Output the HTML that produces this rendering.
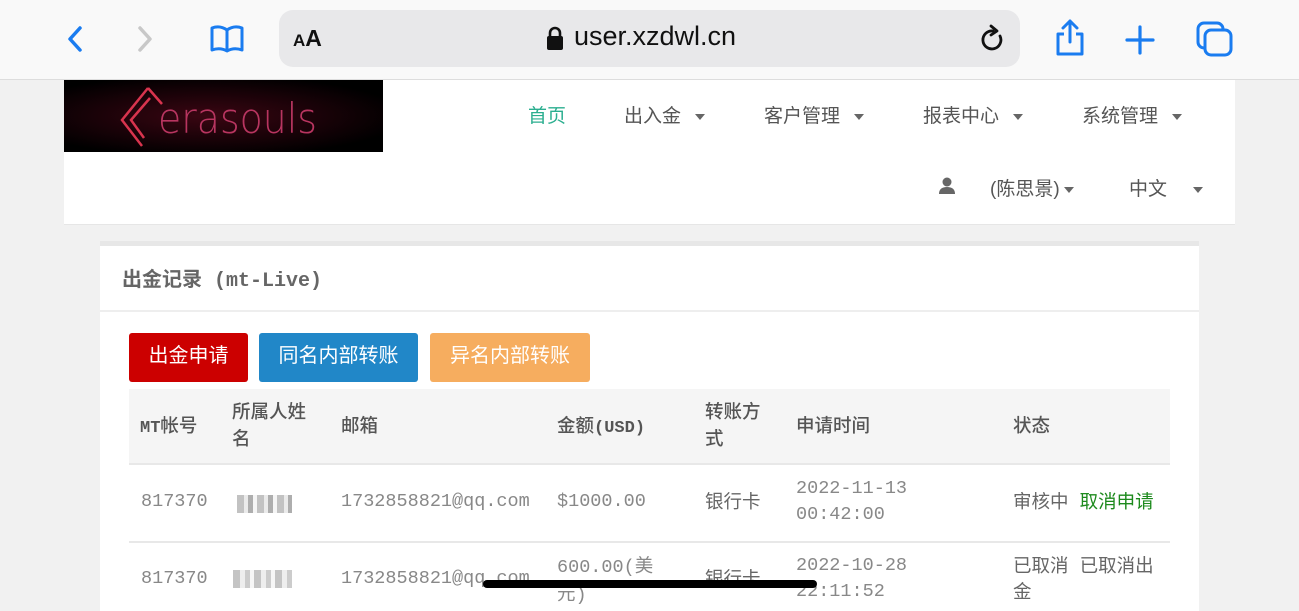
<!DOCTYPE html>
<html><head><meta charset="utf-8"><style>
*{margin:0;padding:0;box-sizing:border-box}
body{width:1299px;height:600px;overflow:hidden;background:#f1f1f1;font-family:"Liberation Sans","Noto Sans CJK SC",sans-serif;position:relative;color:#555}
.a{position:absolute;white-space:nowrap}
.cn{font-family:"Liberation Sans","Noto Sans CJK SC",sans-serif}
.mono{font-family:"Liberation Mono","Noto Sans CJK SC",monospace}
.caret{display:inline-block;width:0;height:0;border-left:5px solid transparent;border-right:5px solid transparent;border-top:6px solid #666;vertical-align:middle;margin-left:14px}
.nav{font-size:19px;color:#555;top:101px}
.th{font-size:18.5px;color:#555;line-height:27px;font-weight:500}
.td{font-size:18.5px;color:#888;line-height:26px}
.btn{position:absolute;top:333px;height:49px;border-radius:3px;color:#fff;font-size:20px;text-align:center;line-height:46px}
</style></head><body>
<div class="a" style="left:0;top:0;width:1299px;height:80px;background:#f9f9f9;border-bottom:1px solid #ddd"></div>
<svg class="a" style="left:60px;top:22px" width="30" height="34"><path d="M20 6 L10 17 L20 28" stroke="#1a7cf0" stroke-width="3.5" fill="none" stroke-linecap="round" stroke-linejoin="round"/></svg>
<svg class="a" style="left:130px;top:22px" width="30" height="34"><path d="M10 6 L20 17 L10 28" stroke="#c8c8c8" stroke-width="3.5" fill="none" stroke-linecap="round" stroke-linejoin="round"/></svg>
<svg class="a" style="left:208px;top:22px" width="40" height="34"><path d="M4 6 Q12 3 19 8 L19 29 Q12 25 4 28 Z M19 8 Q26 3 34 6 L34 28 Q26 25 19 29" stroke="#1a7cf0" stroke-width="3" fill="none" stroke-linejoin="round"/></svg>
<div class="a" style="left:279px;top:10px;width:741px;height:57px;background:#e8e8ea;border-radius:14px"></div>
<div class="a" style="left:293px;top:25px;font-size:23px;color:#111;font-weight:bold"><span style="font-size:17px">A</span>A</div>
<svg class="a" style="left:545px;top:26px" width="20" height="26"><rect x="2" y="10" width="16" height="14" rx="2" fill="#111"/><path d="M5 11 V7 A5 5 0 0 1 15 7 V11" stroke="#111" stroke-width="2.6" fill="none"/></svg>
<div class="a" style="left:574px;top:21px;font-size:27px;color:#111">user.xzdwl.cn</div>
<svg class="a" style="left:978px;top:24px" width="30" height="30"><path d="M22 12 A9 9 0 1 1 15 7" stroke="#111" stroke-width="2.8" fill="none" stroke-linecap="round"/><path d="M13 2 L19 7 L13 11" stroke="#111" stroke-width="2.8" fill="none" stroke-linecap="round" stroke-linejoin="round"/></svg>
<svg class="a" style="left:1052px;top:18px" width="36" height="40"><path d="M12 16 H6 V36 H30 V16 H24" stroke="#1a7cf0" stroke-width="3" fill="none" stroke-linejoin="round"/><path d="M18 24 V3 M11 10 L18 3 L25 10" stroke="#1a7cf0" stroke-width="3" fill="none" stroke-linecap="round" stroke-linejoin="round"/></svg>
<svg class="a" style="left:1124px;top:24px" width="32" height="32"><path d="M16 3 V29 M3 16 H29" stroke="#1a7cf0" stroke-width="3.2" stroke-linecap="round"/></svg>
<svg class="a" style="left:1194px;top:20px" width="42" height="38"><rect x="4" y="3" width="25" height="25" rx="6" stroke="#1a7cf0" stroke-width="3" fill="none"/><rect x="11" y="10" width="26" height="25" rx="6" stroke="#1a7cf0" stroke-width="3" fill="#f9f9f9"/></svg>
<div class="a" style="left:64px;top:80px;width:1171px;height:145px;background:#fff;border-bottom:1px solid #e6e6e6"></div>
<div class="a" style="left:64px;top:80px;width:319px;height:72px;background:radial-gradient(ellipse at 45% 50%,#3a0612 0%,#1a0208 45%,#000 80%)"></div>
<svg class="a" style="left:118px;top:84px" width="50" height="66"><path d="M30 4 L4 36 L24 62 M30 4 L44 20 M32 14 L13 36 L26 54" stroke="#d8344e" stroke-width="2.5" fill="none"/></svg>
<div class="a" style="left:158px;top:95px;font-size:42px;color:#b83560;font-family:'DejaVu Sans',sans-serif;font-weight:200;line-height:48px;transform:scaleX(0.9);transform-origin:left">erasouls</div>
<div class="a nav" style="left:528px;color:#2bae8f">首页</div>
<div class="a nav" style="left:624px">出入金<span class="caret"></span></div>
<div class="a nav" style="left:764px">客户管理<span class="caret"></span></div>
<div class="a nav" style="left:923px">报表中心<span class="caret"></span></div>
<div class="a nav" style="left:1082px">系统管理<span class="caret"></span></div>
<svg class="a" style="left:938px;top:177px" width="18" height="18"><circle cx="9" cy="5" r="4.5" fill="#666"/><path d="M1 17 Q1 10 9 10 Q17 10 17 17 Z" fill="#666"/></svg>
<div class="a nav" style="left:990px;top:174px">(陈思景)<span class="caret" style="margin-left:4px"></span></div>
<div class="a nav" style="left:1129px;top:174px">中文<span class="caret" style="margin-left:26px"></span></div>
<div class="a" style="left:100px;top:241px;width:1099px;height:370px;background:#fff;border-top:5px solid #e7e7e7"></div>
<div class="a" style="left:100px;top:310px;width:1099px;height:2px;background:#eee"></div>
<div class="a" style="left:122px;top:263px;font-size:20px;color:#666;font-weight:bold"><span>出金记录</span><span class="mono" style="font-size:20px"> (mt-Live)</span></div>
<div class="btn" style="left:129px;width:119px;background:#cc0000">出金申请</div>
<div class="btn" style="left:259px;width:159px;background:#2187c8">同名内部转账</div>
<div class="btn" style="left:430px;width:160px;background:#f6ad5f">异名内部转账</div>
<div class="a" style="left:129px;top:389px;width:1041px;height:76px;background:#f5f5f5;border-bottom:2px solid #e8e8e8"></div>
<div class="a th" style="left:140px;top:412px"><span class="mono" style="font-size:17px;font-weight:bold">MT</span>帐号</div>
<div class="a th" style="left:232px;top:398px">所属人姓<br>名</div>
<div class="a th" style="left:341px;top:412px">邮箱</div>
<div class="a th" style="left:557px;top:412px">金额<span class="mono" style="font-size:17px;font-weight:bold">(USD)</span></div>
<div class="a th" style="left:705px;top:398px">转账方<br>式</div>
<div class="a th" style="left:796px;top:412px">申请时间</div>
<div class="a th" style="left:1013px;top:412px">状态</div>
<div class="a" style="left:129px;top:541px;width:1041px;height:2px;background:#e8e8e8"></div>
<div class="a td mono" style="left:141px;top:489px">817370</div>
<div class="a" style="left:237px;top:495px;width:55px;height:18px;background:repeating-linear-gradient(90deg,#999 0 7px,#ddd 7px 11px,#777 11px 16px,#eee 16px 20px);opacity:.6"></div>
<div class="a td mono" style="left:341px;top:489px">1732858821@qq.com</div>
<div class="a td mono" style="left:557px;top:489px">$1000.00</div>
<div class="a td" style="left:705px;top:489px;color:#666">银行卡</div>
<div class="a td mono" style="left:796px;top:476px">2022-11-13<br>00:42:00</div>
<div class="a td" style="left:1013px;top:489px;color:#666">审核中 <span style="color:#1d8a1d;margin-left:6px">取消申请</span></div>
<div class="a td mono" style="left:141px;top:566px">817370</div>
<div class="a" style="left:233px;top:570px;width:59px;height:18px;background:repeating-linear-gradient(90deg,#888 0 7px,#ddd 7px 12px,#999 12px 17px,#eee 17px 21px);opacity:.5"></div>
<div class="a td mono" style="left:341px;top:566px">1732858821@qq.com</div>
<div class="a td mono" style="left:557px;top:553px">600.00(<span class="cn">美</span><br><span class="cn">元</span>)</div>
<div class="a td" style="left:705px;top:566px;color:#666">银行卡</div>
<div class="a td mono" style="left:796px;top:553px">2022-10-28<br>22:11:52</div>
<div class="a td" style="left:1013px;top:553px;color:#666">已取消 <span style="margin-left:6px">已取消出</span><br>金</div>
<div class="a" style="left:483px;top:580px;width:334px;height:8px;border-radius:4px;background:#000"></div>
</body></html>
